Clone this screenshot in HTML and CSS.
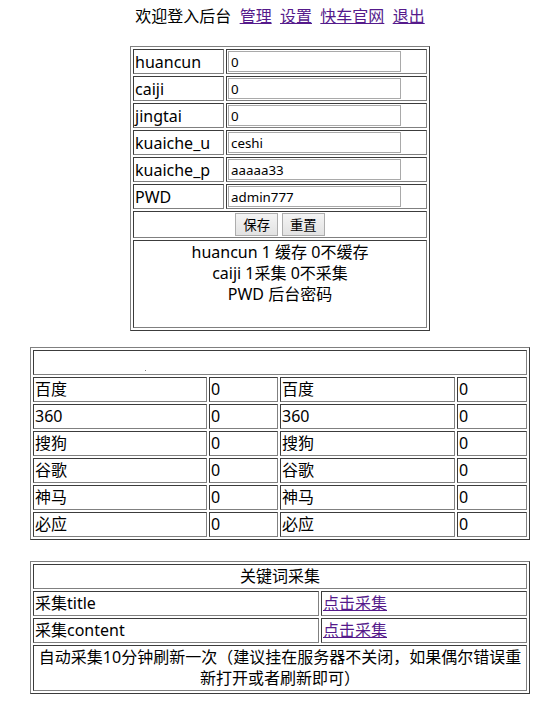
FILE: index.html
```html
<!DOCTYPE html>
<html lang="zh-CN">
<head>
<meta charset="utf-8">
<title>后台</title>
<link rel="stylesheet" href="styles.css">
</head>
<body>
<div class="top">欢迎登入后台&nbsp; <a class="lnk" href="#">管理</a>&nbsp; <a class="lnk" href="#">设置</a>&nbsp; <a class="lnk" href="#">快车官网</a>&nbsp; <a class="lnk" href="#">退出</a></div>

<table class="grid t1">
<tr><td class="lab">huancun</td><td class="val"><input class="inp" type="text" value="0"></td></tr>
<tr><td class="lab">caiji</td><td class="val"><input class="inp" type="text" value="0"></td></tr>
<tr><td class="lab">jingtai</td><td class="val"><input class="inp" type="text" value="0"></td></tr>
<tr><td class="lab">kuaiche_u</td><td class="val"><input class="inp" type="text" value="ceshi"></td></tr>
<tr><td class="lab">kuaiche_p</td><td class="val"><input class="inp" type="text" value="aaaaa33"></td></tr>
<tr><td class="lab">PWD</td><td class="val"><input class="inp" type="text" value="admin777"></td></tr>
<tr><td colspan="2" class="btns"><div class="btnrow"><button class="btn" type="button">保存</button><button class="btn" type="button">重置</button></div></td></tr>
<tr><td colspan="2" class="info">huancun 1 缓存 0不缓存<br>caiji 1采集 0不采集<br>PWD 后台密码</td></tr>
</table>

<table class="grid t2">
<tr><td colspan="4" class="blank"><span class="dot"></span></td></tr>
<tr><td class="c1">百度</td><td class="c2">0</td><td class="c3">百度</td><td class="c4">0</td></tr>
<tr><td>360</td><td>0</td><td>360</td><td>0</td></tr>
<tr><td>搜狗</td><td>0</td><td>搜狗</td><td>0</td></tr>
<tr><td>谷歌</td><td>0</td><td>谷歌</td><td>0</td></tr>
<tr><td>神马</td><td>0</td><td>神马</td><td>0</td></tr>
<tr><td>必应</td><td>0</td><td>必应</td><td>0</td></tr>
</table>

<table class="grid t3">
<tr><td colspan="2" class="center">关键词采集</td></tr>
<tr><td class="k1">采集title</td><td class="k2"><a class="lnk" href="#">点击采集</a></td></tr>
<tr><td>采集content</td><td><a class="lnk" href="#">点击采集</a></td></tr>
<tr><td colspan="2" class="note">自动采集10分钟刷新一次（建议挂在服务器不关闭，如果偶尔错误重新打开或者刷新即可）</td></tr>
</table>
</body>
</html>
```

FILE: styles.css
```css
body {
  margin: 8px 6px 8px 10px;
  font-family: "Noto Sans", "Noto Sans CJK SC", sans-serif;
  font-size: 16px;
  line-height: 21px;
  color: #000;
  background: #fff;
}

.top {
  text-align: center;
  height: 21px;
  line-height: 17px;
  white-space: nowrap;
}

.lnk {
  color: #551a8b;
  text-decoration: underline;
}

.grid {
  border-collapse: separate;
  border-spacing: 2px;
  border: 1px solid;
  border-color: #808080 #3c3c3c #3c3c3c #808080;
  margin-left: auto;
  margin-right: auto;
  box-sizing: border-box;
}

.grid td {
  border: 1px solid;
  border-color: #3c3c3c #808080 #808080 #3c3c3c;
  padding: 1px;
  box-sizing: border-box;
  height: 25px;
  line-height: 21px;
  vertical-align: middle;
  text-align: left;
}

.t1 {
  width: 300px;
  margin-top: 17px;
}

.t1 .lab { width: 91px; }
.t1 .val { width: 201px; }

.grid td.lab {
  padding-top: 2px;
  padding-bottom: 0;
}

.inp {
  display: block;
  box-sizing: border-box;
  width: 173px;
  height: 21px;
  margin: 0;
  padding: 0 2px;
  border: 1px solid #a9a9a9;
  font-family: "Noto Sans", "Noto Sans CJK SC", sans-serif;
  font-size: 13.33px;
  color: #000;
  background: #fff;
}

.grid td.btns {
  height: 27px;
}

.btnrow {
  display: flex;
  justify-content: center;
  gap: 4px;
}

.btn {
  box-sizing: border-box;
  height: 23px;
  margin: 0;
  padding: 0 7px;
  border: 1px solid #adadad;
  border-radius: 0;
  background: linear-gradient(#f4f4f4, #e2e2e2);
  font-family: "Noto Sans CJK SC", sans-serif;
  font-size: 13.33px;
  line-height: 19px;
  color: #000;
}

.grid td.info {
  height: 88px;
  vertical-align: top;
  text-align: center;
}

.t2 {
  width: 500px;
  margin-top: 16px;
}

.t2 .c1 { width: 174px; }
.t2 .c2 { width: 69px; }
.t2 .c3 { width: 175px; }
.t2 .c4 { width: 70px; }

.dot {
  display: inline-block;
  width: 1px;
  height: 1px;
  margin-left: 110px;
  background: #808080;
  vertical-align: -3px;
}

.t3 {
  width: 500px;
  margin-top: 21px;
}

.t3 .k1 { width: 286px; }
.t3 .k2 { width: 206px; }

.grid td.center,
.grid td.note {
  text-align: center;
}

.grid td.note {
  height: 46px;
}
```
